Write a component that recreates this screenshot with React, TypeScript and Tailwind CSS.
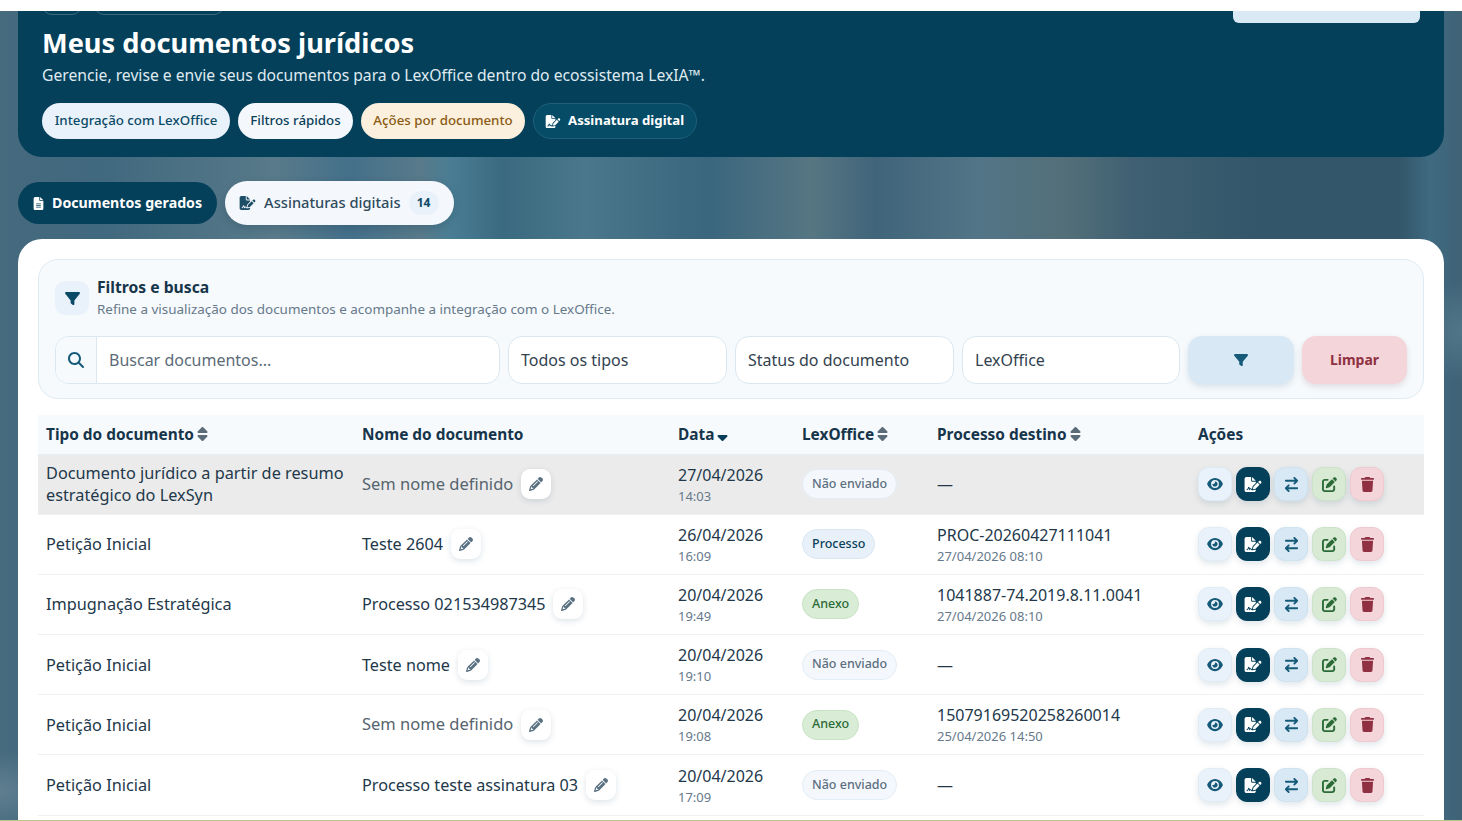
import { FaArrowRightArrowLeft, FaEye, FaFileLines, FaFileSignature, FaFilter, FaMagnifyingGlass, FaPencil, FaPenToSquare, FaSort, FaSortDown, FaTrash } from 'react-icons/fa6';

type Row = {
  tipo: string;
  nome: string;
  semNome?: boolean;
  data: string;
  hora: string;
  status: 'Não enviado' | 'Processo' | 'Anexo';
  processo?: string;
  processoData?: string;
  destaque?: boolean;
};

const rows: Row[] = [
  { tipo: 'Documento jurídico a partir de resumo estratégico do LexSyn', nome: 'Sem nome definido', semNome: true, data: '27/04/2026', hora: '14:03', status: 'Não enviado', destaque: true },
  { tipo: 'Petição Inicial', nome: 'Teste 2604', data: '26/04/2026', hora: '16:09', status: 'Processo', processo: 'PROC-20260427111041', processoData: '27/04/2026 08:10' },
  { tipo: 'Impugnação Estratégica', nome: 'Processo 021534987345', data: '20/04/2026', hora: '19:49', status: 'Anexo', processo: '1041887-74.2019.8.11.0041', processoData: '27/04/2026 08:10' },
  { tipo: 'Petição Inicial', nome: 'Teste nome', data: '20/04/2026', hora: '19:10', status: 'Não enviado' },
  { tipo: 'Petição Inicial', nome: 'Sem nome definido', semNome: true, data: '20/04/2026', hora: '19:08', status: 'Anexo', processo: '15079169520258260014', processoData: '25/04/2026 14:50' },
  { tipo: 'Petição Inicial', nome: 'Processo teste assinatura 03', data: '20/04/2026', hora: '17:09', status: 'Não enviado' },
];

const statusClass = {
  'Não enviado': 'bg-[#f4f8fc] border-[#e3edf5] text-[#5c6f80]',
  Processo: 'bg-[#e8f1f9] border-[#d9e7f2] text-[#0a4159]',
  Anexo: 'bg-[#d9ecd6] border-[#c8e2c4] text-[#2c6a38]',
};

const SortHeader = ({ label, active }: { label: string; active?: boolean }) => (
  <span className="inline-flex items-center gap-[3px]">
    {label}
    {active ? <FaSortDown className="h-4 w-[11px] text-[#0a3d57]" /> : <FaSort className="h-4 w-[11px] text-[#5b6b78]" />}
  </span>
);

const ActionButton = ({ className, children }: { className: string; children: React.ReactNode }) => (
  <button type="button" className={`flex h-[34px] w-[34px] items-center justify-center rounded-[11px] border shadow-[0_3px_6px_rgba(10,60,90,0.12)] ${className}`}>
    {children}
  </button>
);

const Field = ({ label, className }: { label: string; className: string }) => (
  <div className={`flex h-12 items-center rounded-[14px] border border-[#dbe8f1] bg-white px-3 text-base text-[#33424f] ${className}`}>{label}</div>
);

export default function App() {
  return (
    <div className="flex h-screen flex-col overflow-hidden bg-white font-['Noto_Sans',sans-serif]">
      <div className="h-[11px] shrink-0 bg-white" />
      <main className="min-h-0 flex-1 overflow-hidden bg-[radial-gradient(ellipse_60px_40px_at_0px_780px,#5f7f90,transparent),radial-gradient(ellipse_50px_50px_at_1462px_320px,#527689,transparent),linear-gradient(90deg,#466a7e_0px,#40687e_100px,#587a8a_276px,#44708a_350px,#587a8a_420px,#4a7d94_450px,#3a6a80_502px,#4a778b_585px,#3a667e_708px,#567682_811px,#40647a_876px,#527587_979px,#536f79_1063px,#3f6072_1134px,#33566a_1256px,#33566a_1400px,#3f6a80_1430px,#3f6276_1462px)] px-[18px] pb-0">
        <section className="relative -mt-5 h-[166px] rounded-b-[24px] rounded-t-none bg-[#05405a] px-6">
          <div className="flex items-center gap-3">
            <div className="h-6 w-10 rounded-[10px] border border-[#3c6a7e]" />
            <div className="h-[23px] w-[130px] rounded-[10px] border border-[#3c6a7e]" />
          </div>
          <div className="absolute right-6 top-0 h-8 w-[187px] rounded-b-md bg-[#d9e9f5]" />
          <h1 className="mt-[10px] text-[27.2px] font-bold leading-[36px] text-white">Meus documentos jurídicos</h1>
          <p className="mt-[2px] text-[15.7px] leading-[24px] text-[#dfeaf1]">Gerencie, revise e envie seus documentos para o LexOffice dentro do ecossistema LexIA™.</p>
          <div className="mt-[16px] flex items-center gap-2 text-[13.3px]">
            <span className="flex h-9 w-[188px] items-center justify-center rounded-full bg-[#e9f2fa] font-medium text-[#0a4a66]">Integração com LexOffice</span>
            <span className="flex h-9 w-[115px] items-center justify-center rounded-full bg-[#f4f8fc] font-medium text-[#0a3f58]">Filtros rápidos</span>
            <span className="flex h-9 w-[164px] items-center justify-center rounded-full bg-[#fbf0dd] font-medium text-[#8a5a13]">Ações por documento</span>
            <span className="flex h-9 w-[164px] items-center gap-[7px] rounded-full border border-[#1f6078] bg-[#064c66] px-[11px] text-[13.2px] font-bold whitespace-nowrap text-white">
              <FaFileSignature className="h-[13px] w-4" />
              Assinatura digital
            </span>
          </div>
        </section>

        <div className="mt-6 flex items-center gap-2">
          <button type="button" className="flex h-[42px] items-center gap-2 rounded-full bg-[#05405a] px-[15px] text-[14.2px] font-bold whitespace-nowrap text-white">
            <FaFileLines className="h-[13px] w-[11px]" />
            Documentos gerados
          </button>
          <button type="button" className="flex h-11 items-center gap-2 rounded-full bg-[#f4f8fc] pl-[14px] pr-[15px] text-[14.65px] font-medium whitespace-nowrap text-[#2f4a5c] shadow-[0_3px_8px_rgba(10,40,60,0.2)]">
            <FaFileSignature className="h-[14px] w-[17px] text-[#1e4d66]" />
            Assinaturas digitais
            <span className="flex h-6 w-[30px] items-center justify-center rounded-full bg-[#e9f2fa] text-xs font-bold text-[#0f4a66]">14</span>
          </button>
        </div>

        <section className="mt-[14px] rounded-t-[24px] bg-white p-5">
          <div className="h-[140px] rounded-[20px] border border-[#dfebf2] bg-[#f6fafd] px-4 pt-4">
            <div className="flex items-center gap-2">
              <div className="flex h-[34px] w-[34px] items-center justify-center rounded-[10px] bg-[#e9f2fa]">
                <FaFilter className="h-[15px] w-[17px] text-[#0a4a66]" />
              </div>
              <div>
                <div className="text-[15.7px] font-bold leading-[22px] text-[#16354a]">Filtros e busca</div>
                <div className="text-[13.44px] leading-[22px] text-[#66798a]">Refine a visualização dos documentos e acompanhe a integração com o LexOffice.</div>
              </div>
            </div>
            <div className="mt-4 flex items-center gap-2">
              <div className="flex h-12 w-[445px] items-center overflow-hidden rounded-[14px] border border-[#dbe8f1] bg-white">
                <div className="flex h-full w-[41px] shrink-0 items-center justify-center border-r border-[#dbe8f1] bg-[#f6fafd]">
                  <FaMagnifyingGlass className="h-4 w-4 text-[#155a78]" />
                </div>
                <span className="pl-3 text-base text-[#5c6b78]">Buscar documentos...</span>
              </div>
              <Field label="Todos os tipos" className="w-[219px]" />
              <Field label="Status do documento" className="w-[219px]" />
              <Field label="LexOffice" className="w-[218px]" />
              <button type="button" className="flex h-12 w-[106px] items-center justify-center rounded-[14px] bg-[#d8e8f5] shadow-[0_3px_6px_rgba(10,60,90,0.12)]">
                <FaFilter className="h-[14px] w-4 text-[#155a78]" />
              </button>
              <button type="button" className="h-12 w-[105px] rounded-[14px] bg-[#f4d5da] text-sm font-bold text-[#8f3142] shadow-[0_3px_6px_rgba(90,20,30,0.12)]">Limpar</button>
            </div>
          </div>

          <table className="mt-4 w-[1386px] table-fixed border-collapse">
            <colgroup>
              <col className="w-[316px]" />
              <col className="w-[316px]" />
              <col className="w-[124px]" />
              <col className="w-[135px]" />
              <col className="w-[261px]" />
              <col className="w-[234px]" />
            </colgroup>
            <thead>
              <tr className="h-[39px] border-b border-[#e8eff4] bg-[#f6fafd] text-left text-[15.4px] text-[#16354a]">
                <th className="px-2 font-bold"><SortHeader label="Tipo do documento" /></th>
                <th className="px-2 font-bold">Nome do documento</th>
                <th className="px-2 font-bold"><SortHeader label="Data" active /></th>
                <th className="px-2 font-bold"><SortHeader label="LexOffice" /></th>
                <th className="px-2 font-bold"><SortHeader label="Processo destino" /></th>
                <th className="px-2 font-bold">Ações</th>
              </tr>
            </thead>
            <tbody>
              {rows.map((row, i) => (
                <tr key={i} className={`h-[60.2px] border-b border-[#eef1f3] text-base text-[#22384a] ${row.destaque ? 'bg-[#ebebeb]' : 'bg-white'}`}>
                  <td className="px-2 text-[16.3px] leading-[22px]">{row.tipo}</td>
                  <td className="px-2 text-[16.2px]">
                    <div className="flex items-center gap-2">
                      <span className={row.semNome ? 'text-[16.5px] text-[#55646f]' : ''}>{row.nome}</span>
                      <button type="button" className="flex h-[30px] w-[30px] items-center justify-center rounded-[9px] bg-white shadow-[0_2px_6px_rgba(10,60,90,0.14)]">
                        <FaPencil className="h-[14px] w-[14px] text-[#5a7182]" />
                      </button>
                    </div>
                  </td>
                  <td className="px-2">
                    <div className="leading-[22px]">{row.data}</div>
                    <div className="mt-px text-[13px] leading-[18px] text-[#66798a]">{row.hora}</div>
                  </td>
                  <td className="px-2">
                    <span className={`inline-flex h-[30px] items-center rounded-full border px-[9px] text-[12.5px] font-medium ${statusClass[row.status]}`}>{row.status}</span>
                  </td>
                  <td className="px-2">
                    {row.processo ? (
                      <>
                        <div className="leading-[22px]">{row.processo}</div>
                        <div className="mt-px text-[13px] leading-[18px] text-[#66798a]">{row.processoData}</div>
                      </>
                    ) : (
                      <span>—</span>
                    )}
                  </td>
                  <td className="px-2">
                    <div className="flex items-center gap-1">
                      <ActionButton className="border-[#e0ecf5] bg-[#e9f2fa]"><FaEye className="h-[14px] w-4 text-[#155a78]" /></ActionButton>
                      <ActionButton className="border-[#05405a] bg-[#05405a]"><FaFileSignature className="h-[15px] w-[18px] text-white" /></ActionButton>
                      <ActionButton className="border-[#cfe2f0] bg-[#d8e8f5]"><FaArrowRightArrowLeft className="h-[15px] w-[15px] text-[#155a78]" /></ActionButton>
                      <ActionButton className="border-[#cbe3c8] bg-[#d8ead3]"><FaPenToSquare className="h-[15px] w-[15px] text-[#2c6a38]" /></ActionButton>
                      <ActionButton className="border-[#efc9cf] bg-[#f4d5da]"><FaTrash className="h-[15px] w-[13px] text-[#8f3142]" /></ActionButton>
                    </div>
                  </td>
                </tr>
              ))}
            </tbody>
          </table>
        </section>
      </main>
      <div className="h-px shrink-0 bg-[#b9c78e]" />
    </div>
  );
}
